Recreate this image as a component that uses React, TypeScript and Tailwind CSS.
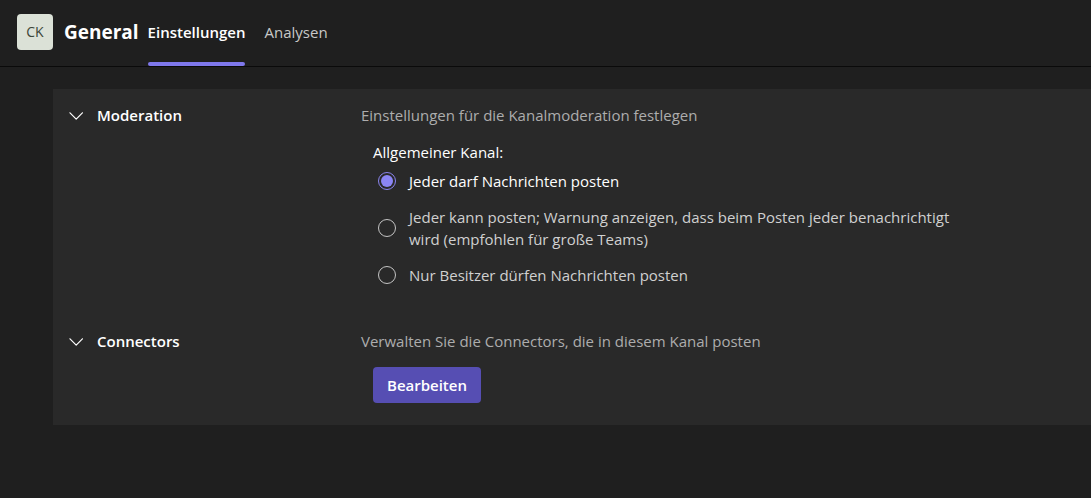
import { useState, type ReactNode } from "react";

const options = [
  "Jeder darf Nachrichten posten",
  "Jeder kann posten; Warnung anzeigen, dass beim Posten jeder benachrichtigt wird (empfohlen für große Teams)",
  "Nur Besitzer dürfen Nachrichten posten",
];

function Chevron({ open }: { open: boolean }) {
  return (
    <svg
      viewBox="0 0 14 9"
      className={`h-[9px] w-3.5 shrink-0 ${open ? "" : "-rotate-90"}`}
      fill="none"
      stroke="currentColor"
      strokeWidth="1.2"
      strokeLinecap="round"
      strokeLinejoin="round"
      aria-hidden="true"
    >
      <path d="M1 1.8 7.2 8.1l6.2-6.3" />
    </svg>
  );
}

function Section({ title, summary, children }: { title: string; summary: string; children: ReactNode }) {
  const [open, setOpen] = useState(true);
  return (
    <section className="flex">
      <h2 className="w-[292px] shrink-0 font-semibold text-white">
        <button
          type="button"
          aria-expanded={open}
          onClick={() => setOpen(!open)}
          className="flex items-center gap-3.5"
        >
          <Chevron open={open} />
          {title}
        </button>
      </h2>
      <div className="min-w-0 flex-1">
        <p className="text-[#adadad]">{summary}</p>
        {open && <div className="pl-3">{children}</div>}
      </div>
    </section>
  );
}

export default function App() {
  const [selected, setSelected] = useState(0);
  return (
    <div className="min-h-screen bg-[#1f1f1f] font-['Open_Sans','Noto_Sans',sans-serif] text-[15px] leading-[22px]">
      <header className="flex h-[67px] items-stretch border-b border-[#0a0a0a] pl-[17px]">
        <div className="mt-3.5 flex size-9 items-center justify-center rounded bg-[#dbe1d7] text-sm text-[#3c4638]">
          CK
        </div>
        <h1 className="ml-[11px] pt-[21px] text-[19px] font-bold text-white">General</h1>
        <nav className="ml-[9px] flex gap-[19px]">
          <a
            href="#einstellungen"
            aria-current="page"
            className="flex flex-col justify-between pt-[21px] font-semibold text-white"
          >
            Einstellungen
            <span className="h-1 rounded-xs bg-[#7f78ec]" />
          </a>
          <a href="#analysen" className="pt-[21px] text-[#c8c8c8]">
            Analysen
          </a>
        </nav>
      </header>
      <main className="ml-[53px] mt-[22px] flex flex-col gap-11 bg-[#292929] pb-[22px] pl-4 pt-[15px]">
        <Section title="Moderation" summary="Einstellungen für die Kanalmoderation festlegen">
          <fieldset className="mt-[15px]">
            <legend className="text-white">Allgemeiner Kanal:</legend>
            <div className="mt-[7px] flex max-w-[590px] flex-col gap-3.5 pl-1">
              {options.map((label, i) => (
                <label
                  key={label}
                  className={`flex items-center gap-3 ${selected === i ? "text-white" : "text-[#d0d0d0]"}`}
                >
                  <input
                    type="radio"
                    name="moderation"
                    checked={selected === i}
                    onChange={() => setSelected(i)}
                    className="m-px size-[18px] shrink-0 appearance-none rounded-full border border-[#c4c4c4] checked:border-[#8b85f0] checked:bg-[#8b85f5] checked:bg-clip-content checked:p-0.5"
                  />
                  {label}
                </label>
              ))}
            </div>
          </fieldset>
        </Section>
        <Section title="Connectors" summary="Verwalten Sie die Connectors, die in diesem Kanal posten">
          <button
            type="button"
            className="mt-[15px] h-9 rounded bg-[#564eb3] px-3.5 font-semibold text-white"
          >
            Bearbeiten
          </button>
        </Section>
      </main>
    </div>
  );
}
